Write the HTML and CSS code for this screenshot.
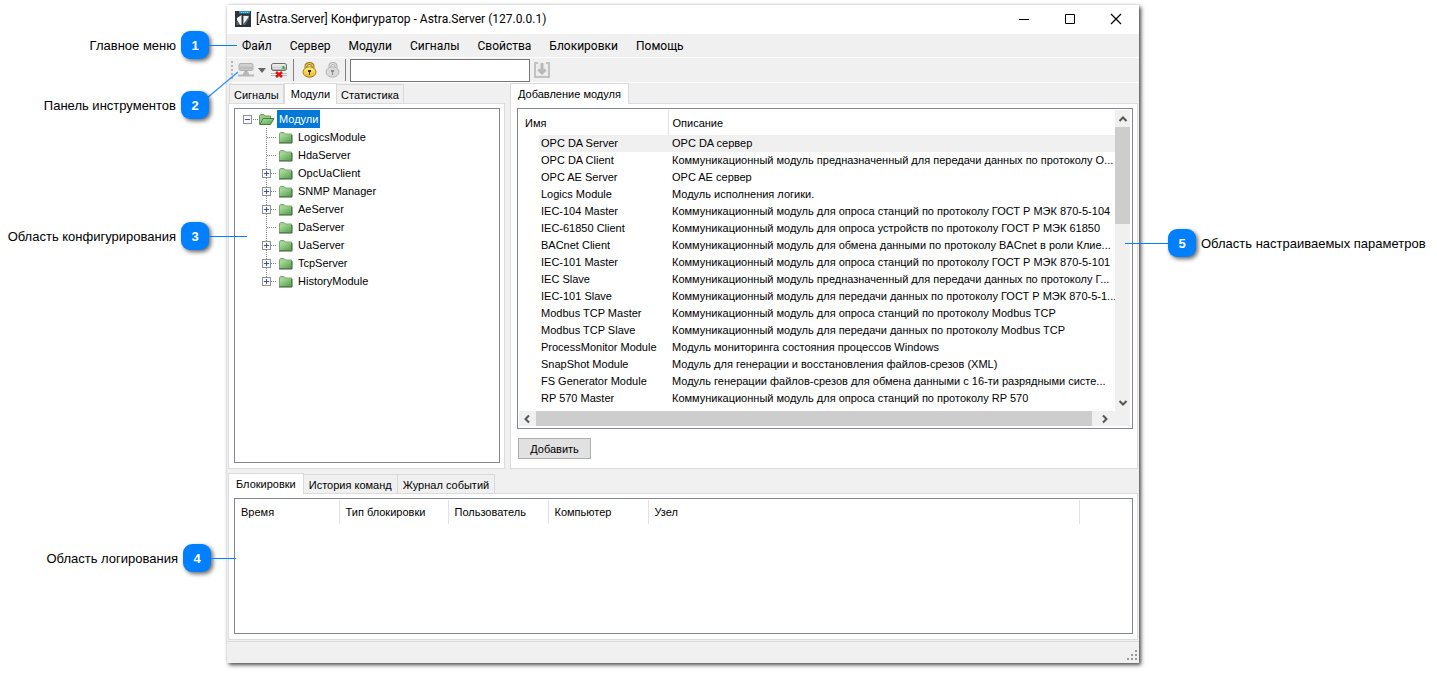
FILE: index.html
```html
<!DOCTYPE html>
<html lang="ru">
<head>
<meta charset="utf-8">
<title>Astra.Server Конфигуратор</title>
<link rel="stylesheet" href="styles.css">
</head>
<body>
<svg class="defs" aria-hidden="true">
  <defs>
    <linearGradient id="green" x1="0" y1="0" x2="1" y2="1"><stop offset="0" stop-color="#b4e0a2"/><stop offset="1" stop-color="#52a34c"/></linearGradient>
    <linearGradient id="gold" x1="0" y1="0" x2="0" y2="1"><stop offset="0" stop-color="#fff27a"/><stop offset="1" stop-color="#eab52c"/></linearGradient>
    <linearGradient id="steel" x1="0" y1="0" x2="0" y2="1"><stop offset="0" stop-color="#fafafa"/><stop offset="1" stop-color="#a8a8a8"/></linearGradient>
    <symbol id="folder" viewBox="0 0 15 13"><path d="M1.5 11.5V2.5L2.5 1.5H6L7 3H13.5V11.5Z" fill="#a2cf92" stroke="#78a86d"/><path d="M2 4H13V11H2Z" fill="url(#green)"/><path d="M14 4V12H1" fill="none" stroke="#3b5236"/></symbol>
    <symbol id="folder-open" viewBox="0 0 17 13"><path d="M1.5 11.5V2.5L2.5 1.5H6L7 3H12.500V6" fill="#9ccb8c" stroke="#67995c"/><path d="M2 11.500L5 5.500H16L12.500 11.500Z" fill="url(#green)" stroke="#438140"/></symbol>
    <symbol id="plus" viewBox="0 0 9 9"><rect x=".5" y=".5" width="8" height="8" fill="#f8f8f8" stroke="#919191"/><path d="M2 4.500H7M4.500 2V7" stroke="#3c5596"/></symbol>
    <symbol id="minus" viewBox="0 0 9 9"><rect x=".5" y=".5" width="8" height="8" fill="#f8f8f8" stroke="#919191"/><path d="M2 4.500H7" stroke="#3c5596"/></symbol>
    <symbol id="leaf" viewBox="0 0 16 18"><path d="M4.500 0V18M5 9.500H15" stroke="#808080" stroke-dasharray="1 1"/></symbol>
    <symbol id="node" viewBox="0 0 16 18"><path d="M4.500 0V18M9 9.500H15" stroke="#808080" stroke-dasharray="1 1"/><use href="#plus" x="0" y="5" width="9" height="9"/></symbol>
    <symbol id="last" viewBox="0 0 16 18"><path d="M4.500 0V9M9 9.500H15" stroke="#808080" stroke-dasharray="1 1"/><use href="#plus" x="0" y="5" width="9" height="9"/></symbol>
    <symbol id="chev" viewBox="0 0 10 10"><path d="M1.500 7L5 3.500L8.500 7" fill="none" stroke="#555" stroke-width="2"/></symbol>
  </defs>
</svg>

<div class="page">
  <aside class="gutter">
    <div class="callout c1"><span>Главное меню</span><b class="badge">1</b><i class="line"></i></div>
    <div class="callout c2"><span>Панель инструментов</span><svg class="diagonal" width="33" height="28"><path d="M1 27L32 1" stroke="#2e91ff" stroke-width="1.300"/></svg><b class="badge">2</b></div>
    <div class="callout c3"><span>Область конфигурирования</span><b class="badge">3</b><i class="line"></i></div>
    <div class="callout c4"><span>Область логирования</span><b class="badge">4</b><i class="line"></i></div>
  </aside>

  <main class="window">
    <header class="titlebar">
      <svg width="16" height="16" viewBox="0 0 16 16"><path d="M0 0H16V16H0Z" fill="#2b3338"/><path d="M4 0H15V2.500H4Z" fill="#2d94c8"/><path d="M6 1.500H13" stroke="#8fd0ee" stroke-dasharray="1 1"/><path d="M2 7L6.500 4V14H5L2 9Z" fill="#f3f6f7"/><path d="M1.500 9L5 14H1.500Z" fill="#59636a"/><path d="M8 4.500H14V14H8Z" fill="#59636a"/><path d="M8.500 5H13.500V6L8.500 13Z" fill="#eef2f3"/><path d="M14 8V14H10Z" fill="#2b3338"/></svg>
      <h1>[Astra.Server] Конфигуратор - Astra.Server (127.0.0.1)</h1>
      <button aria-label="Свернуть"><svg width="12" height="12"><path d="M1 6.500H11" stroke="#000"/></svg></button>
      <button aria-label="Развернуть"><svg width="12" height="12"><path d="M1.500 1.500H10.500V10.500H1.500Z" fill="none" stroke="#000"/></svg></button>
      <button aria-label="Закрыть"><svg width="12" height="12"><path d="M1 1L11 11M11 1L1 11" stroke="#000" stroke-width="1.200"/></svg></button>
    </header>
    <nav class="menu"><button>Файл</button><button>Сервер</button><button>Модули</button><button>Сигналы</button><button>Свойства</button><button>Блокировки</button><button>Помощь</button></nav>
    <div class="toolbar">
      <svg width="4" height="20"><path d="M2 1V20" stroke="#b5b5b5" stroke-width="2" stroke-dasharray="2 2"/></svg>
      <button aria-label="Подключить"><svg width="18" height="18" viewBox="0 0 18 18"><path d="M2 4Q2 2.500 4 2.500H14Q16 2.500 16 4V8Q16 9.500 14 9.500H4Q2 9.500 2 8Z" fill="#d2d2d2" stroke="#b0b0b0"/><path d="M3 5.500H13V8.500H3Z" fill="#bdbdbd"/><path d="M14 6V8" stroke="#999"/><path d="M9 10V13" stroke="#ababab" stroke-width="3"/><path d="M1 14.500H17M6 12.500H12" stroke="#b8b8b8" stroke-width="2"/></svg></button>
      <button class="drop" aria-label="Список серверов"><svg width="8" height="5"><path d="M0 0H8L4 5Z" fill="#666"/></svg></button>
      <button aria-label="Отключить"><svg width="18" height="18" viewBox="0 0 18 18"><path d="M1 12.500H17M1 14.500H17" stroke="#b3bcb7"/><path d="M1.500 4Q1.500 2.500 4 2.500H14Q16.500 2.500 16.500 4V8Q16.500 9.500 14 9.500H4Q1.500 9.500 1.500 8Z" fill="url(#steel)" stroke="#6d6d6d"/><path d="M3 5.500H11M3 7.500H11" stroke="#e4e4e4"/><path d="M13.500 5V8" stroke="#28b828" stroke-width="2"/><path d="M6 11L12 16M12 11L6 16" stroke="#e21313" stroke-width="2.600"/></svg></button>
      <i class="sep"></i>
      <button class="lock" aria-label="Заблокировать"><svg width="15" height="16" viewBox="0 0 15 16"><path d="M4 8V4.500Q4 1.500 7.500 1.500T11 4.500V8" fill="none" stroke="#a07c16" stroke-width="3"/><path d="M4 8V4.500Q4 1.500 7.500 1.500T11 4.500V8" fill="none" stroke="#f4dc66"/><ellipse cx="7.500" cy="10" rx="6.500" ry="5.200" fill="url(#gold)" stroke="#a97f16"/><path d="M6 8H9V10H8V13H7V10H6Z" fill="#3f320a"/></svg></button>
      <button class="lock" aria-label="Разблокировать"><svg width="15" height="16" viewBox="0 0 15 16"><path d="M5 5V4Q5 1.500 8 1.500T11 4.500V8" fill="none" stroke="#b3b3b3" stroke-width="3"/><path d="M5 5V4Q5 1.500 8 1.500T11 4.500V8" fill="none" stroke="#e8e8e8"/><ellipse cx="7.500" cy="10" rx="6.500" ry="5.200" fill="#d9d9d9" stroke="#b6b6b6"/><path d="M6 8H9V10H8V13H7V10H6Z" fill="#8c8c8c"/></svg></button>
      <i class="sep"></i>
      <input type="text" aria-label="Поиск">
      <button aria-label="Загрузить"><svg width="16" height="16" viewBox="0 0 16 16"><path d="M4 1H1V15H15V1H12" fill="#ececec" stroke="#c2c2c2" stroke-width="2"/><path d="M8 1V11M4.500 7.500L8 11L11.500 7.500" fill="none" stroke="#b8b8b8" stroke-width="3"/></svg></button>
    </div>

    <div class="upper">
      <section class="pane">
        <div class="tabs" role="tablist"><button role="tab">Сигналы</button><button role="tab" aria-selected="true">Модули</button><button role="tab">Статистика</button></div>
        <div class="panel">
          <div class="box tree">
            <div class="root"><button aria-label="Свернуть узел"><svg width="15" height="9"><use href="#minus" width="9" height="9"/><path d="M10 4.500H15" stroke="#808080" stroke-dasharray="1 1"/></svg></button><svg width="17" height="13"><use href="#folder-open"/></svg><span>Модули</span></div>
            <ul>
              <li><svg width="16" height="18"><use href="#leaf"/></svg><svg width="15" height="13"><use href="#folder"/></svg><span>LogicsModule</span></li>
              <li><svg width="16" height="18"><use href="#leaf"/></svg><svg width="15" height="13"><use href="#folder"/></svg><span>HdaServer</span></li>
              <li><button aria-label="Развернуть OpcUaClient"><svg width="16" height="18"><use href="#node"/></svg></button><svg width="15" height="13"><use href="#folder"/></svg><span>OpcUaClient</span></li>
              <li><button aria-label="Развернуть SNMP Manager"><svg width="16" height="18"><use href="#node"/></svg></button><svg width="15" height="13"><use href="#folder"/></svg><span>SNMP Manager</span></li>
              <li><button aria-label="Развернуть AeServer"><svg width="16" height="18"><use href="#node"/></svg></button><svg width="15" height="13"><use href="#folder"/></svg><span>AeServer</span></li>
              <li><svg width="16" height="18"><use href="#leaf"/></svg><svg width="15" height="13"><use href="#folder"/></svg><span>DaServer</span></li>
              <li><button aria-label="Развернуть UaServer"><svg width="16" height="18"><use href="#node"/></svg></button><svg width="15" height="13"><use href="#folder"/></svg><span>UaServer</span></li>
              <li><button aria-label="Развернуть TcpServer"><svg width="16" height="18"><use href="#node"/></svg></button><svg width="15" height="13"><use href="#folder"/></svg><span>TcpServer</span></li>
              <li><button aria-label="Развернуть HistoryModule"><svg width="16" height="18"><use href="#last"/></svg></button><svg width="15" height="13"><use href="#folder"/></svg><span>HistoryModule</span></li>
            </ul>
          </div>
        </div>
      </section>

      <section class="pane settings">
        <div class="tabs wide" role="tablist"><button role="tab" aria-selected="true">Добавление модуля</button></div>
        <div class="panel">
          <div class="box list">
            <table class="modules">
              <colgroup><col class="indent"><col class="name"><col></colgroup>
              <thead><tr><th colspan="2">Имя</th><th>Описание</th></tr></thead>
              <tbody>
                <tr class="selected"><td></td><td>OPC DA Server</td><td>OPC DA сервер</td></tr>
                <tr><td></td><td>OPC DA Client</td><td>Коммуникационный модуль предназначенный для передачи данных по протоколу О...</td></tr>
                <tr><td></td><td>OPC AE Server</td><td>OPC AE сервер</td></tr>
                <tr><td></td><td>Logics Module</td><td>Модуль исполнения логики.</td></tr>
                <tr><td></td><td>IEC-104 Master</td><td>Коммуникационный модуль для опроса станций по протоколу ГОСТ Р МЭК 870-5-104</td></tr>
                <tr><td></td><td>IEC-61850 Client</td><td>Коммуникационный модуль для опроса устройств по протоколу ГОСТ Р МЭК 61850</td></tr>
                <tr><td></td><td>BACnet Client</td><td>Коммуникационный модуль для обмена данными по протоколу BACnet в роли Клие...</td></tr>
                <tr><td></td><td>IEC-101 Master</td><td>Коммуникационный модуль для опроса станций по протоколу ГОСТ Р МЭК 870-5-101</td></tr>
                <tr><td></td><td>IEC Slave</td><td>Коммуникационный модуль предназначенный для передачи данных по протоколу Г...</td></tr>
                <tr><td></td><td>IEC-101 Slave</td><td>Коммуникационный модуль для передачи данных по протоколу ГОСТ Р МЭК 870-5-1...</td></tr>
                <tr><td></td><td>Modbus TCP Master</td><td>Коммуникационный модуль для опроса станций по протоколу Modbus TCP</td></tr>
                <tr><td></td><td>Modbus TCP Slave</td><td>Коммуникационный модуль для передачи данных по протоколу Modbus TCP</td></tr>
                <tr><td></td><td>ProcessMonitor Module</td><td>Модуль мониторинга состояния процессов Windows</td></tr>
                <tr><td></td><td>SnapShot Module</td><td>Модуль для генерации и восстановления файлов-срезов (XML)</td></tr>
                <tr><td></td><td>FS Generator Module</td><td>Модуль генерации файлов-срезов для обмена данными с 16-ти разрядными систе...</td></tr>
                <tr><td></td><td>RP 570 Master</td><td>Коммуникационный модуль для опроса станций по протоколу RP 570</td></tr>
              </tbody>
            </table>
            <div class="vscroll"><svg width="10" height="10"><use href="#chev"/></svg><i></i><svg class="down" width="10" height="10"><use href="#chev"/></svg></div>
            <div class="hscroll"><svg class="left" width="10" height="10"><use href="#chev"/></svg><i></i><svg class="right" width="10" height="10"><use href="#chev"/></svg></div>
          </div>
          <button class="add">Добавить</button>
        </div>
      </section>
    </div>

    <section class="pane lower">
      <div class="tabs wide" role="tablist"><button role="tab" aria-selected="true">Блокировки</button><button role="tab">История команд</button><button role="tab">Журнал событий</button></div>
      <div class="panel">
        <div class="box">
          <table class="log">
            <colgroup><col class="time"><col class="type"><col class="user"><col class="host"><col><col class="rest"></colgroup>
            <thead><tr><th>Время</th><th>Тип блокировки</th><th>Пользователь</th><th>Компьютер</th><th>Узел</th><th></th></tr></thead>
          </table>
        </div>
      </div>
    </section>
    <footer class="status"><svg width="12" height="12"><path d="M9 2H11M5 6H11M1 10H11" stroke="#999" stroke-width="2" stroke-dasharray="2 2"/></svg></footer>
  </main>

  <aside class="gutter">
    <div class="callout c5"><i class="line"></i><b class="badge">5</b><span>Область настраиваемых параметров</span></div>
  </aside>
</div>
</body>
</html>
```
FILE: styles.css
```css
* { box-sizing: border-box; }
body { margin: 0; background: #fff; color: #000; font-family: "Liberation Sans", Arial, sans-serif; font-size: 11px; }
.defs { position: absolute; width: 0; height: 0; }
svg { display: block; flex: none; }
button { font: inherit; color: inherit; background: none; border: 0; padding: 0; margin: 0; }

.page { display: grid; grid-template-columns: 227px minmax(0, 1fr) 298px; min-height: 100vh; padding: 5px 0 10px; }
.window { display: flex; flex-direction: column; background: #f0f0f0; box-shadow: 2px 2px 4px rgba(0, 0, 0, .7), 0 0 3px rgba(0, 0, 0, .12); }

/* Numbered callouts */
.gutter { position: relative; z-index: 1; }
.callout { position: absolute; display: flex; align-items: center; gap: 5px; font-size: 13px; white-space: nowrap; }
.c1, .c2, .c3 { right: 18px; }
.c1 { top: 26px; }
.c2 { top: 86px; }
.c3 { top: 217px; }
.c4 { top: 539px; right: 16px; }
.c5 { top: 224px; left: 29px; }
.badge { position: relative; display: grid; place-items: center; width: 28px; height: 28px; border-radius: 9px; background: #0080ff; color: #fff; box-shadow: 2px 2px 4px rgba(0, 0, 0, .6); }
.line { position: absolute; top: 14px; left: 100%; width: 28px; height: 1px; background: #0080ff; }
.c3 .line { width: 38px; }
.c4 .line { width: 25px; }
.c5 .line { left: auto; right: 100%; width: 43px; }
.diagonal { position: absolute; right: -30px; bottom: 20px; }

.titlebar { display: flex; align-items: center; height: 29px; padding: 0 0 2px 8px; background: #fff; }
.titlebar h1 { flex: 1; margin: 0 0 0 5px; font: 12px/16px Roboto, "Noto Sans", sans-serif; white-space: nowrap; }
.titlebar button { display: grid; place-items: center; width: 46px; height: 27px; }
.menu { display: flex; gap: 18px; height: 24px; padding: 0 15px; border-bottom: 1px solid #fff; font: 12px/24px Roboto, "Noto Sans", sans-serif; }

.toolbar { display: flex; align-items: center; height: 25px; padding-left: 3px; border-bottom: 1px solid #fff; }
.toolbar button { margin-left: 3px; }
.toolbar .drop { margin-right: 1px; }
.toolbar .lock { margin: 0 0 0 8px; }
.sep { width: 1px; height: 22px; margin-left: 5px; background: #808080; }
.toolbar input { width: 180px; height: 23px; margin: 0 1px 0 4px; border: 1px solid #767676; background: #fff; font: inherit; }

.upper { display: grid; grid-template-columns: 277px minmax(0, 1fr); gap: 5px; padding: 0 1px; }
.pane { display: flex; flex-direction: column; min-width: 0; }
.lower { flex: 1; margin: 4px 1px 0; }
.tabs { display: flex; align-items: flex-end; height: 20px; padding-left: 1px; }
.tabs button { height: 19px; padding: 0 4px; border: 1px solid #d9d9d9; border-bottom: 0; line-height: 20px; white-space: nowrap; }
.tabs button + button { border-left: 0; padding: 0 4px; }
.tabs button[aria-selected="true"] { position: relative; height: 21px; margin-bottom: -1px; padding: 0 6px; border-left: 1px solid #d9d9d9; line-height: 19px; background: #fff; }
.wide { padding-left: 0; }
.wide button + button { padding: 0 5px; }
.wide button[aria-selected="true"] { padding: 0 7px; }
.panel { flex: 1; display: flex; flex-direction: column; padding: 4px 4px 5px 5px; border: 1px solid #dcdcdc; background: #fff; }
.settings .panel { padding-left: 6px; }
.box { flex: 1; border: 1px solid #828790; background: #fff; }

.tree { padding: 1px 0 0 8px; }
.root, .tree li { display: flex; align-items: center; height: 18px; }
.root span { margin-left: 2px; padding: 0 2px; background: #0078d7; color: #fff; line-height: 18px; }
.tree ul { margin: 0 0 0 19px; padding: 0; list-style: none; }
.tree li span { margin-left: 5px; }

table { width: 100%; border-collapse: collapse; table-layout: fixed; }
th { height: 24px; padding: 0 6px; border-right: 1px solid #e2e2e2; font-weight: 400; text-align: left; }
th:last-child { border-right: 0; }
td { height: 17px; padding: 0 0 0 2px; line-height: 17px; white-space: nowrap; }
.modules td:last-child, .modules th:last-child { padding-left: 4px; }
.list { flex: none; display: grid; grid-template-columns: minmax(0, 1fr) 15px; padding: 1px 2px 2px 1px; }
.modules { margin-bottom: 4px; }
.modules th { height: 25px; }
.indent { width: 20px; }
.name { width: 129px; }
.selected td + td { background: #f0f0f0; }
.vscroll { display: flex; flex-direction: column; align-items: center; padding: 4px 0 3px; background: #f0f0f0; }
.vscroll i { width: 15px; height: 97px; margin: 3px 0 auto; background: #cdcdcd; }
.hscroll { grid-column: 1 / -1; display: flex; align-items: center; height: 15px; padding: 0 20px 0 3px; background: #f0f0f0; }
.hscroll i { flex: 1; height: 15px; margin: 0 8px 0 4px; background: #cdcdcd; }
.down { transform: rotate(180deg); }
.left { transform: rotate(-90deg); }
.right { transform: rotate(90deg); }
.add { align-self: flex-start; width: 73px; height: 21px; margin: 9px 0 4px 1px; border: 1px solid #adadad; background: #e1e1e1; }

.lower .box { padding-top: 1px; }
.time { width: 104px; }
.type { width: 109px; }
.user, .host { width: 100px; }
.rest { width: 53px; }
.status { display: flex; justify-content: flex-end; align-items: flex-end; height: 22px; margin-top: 1px; padding: 0 1px 2px; border-top: 1px solid #dcdcdc; }
```
